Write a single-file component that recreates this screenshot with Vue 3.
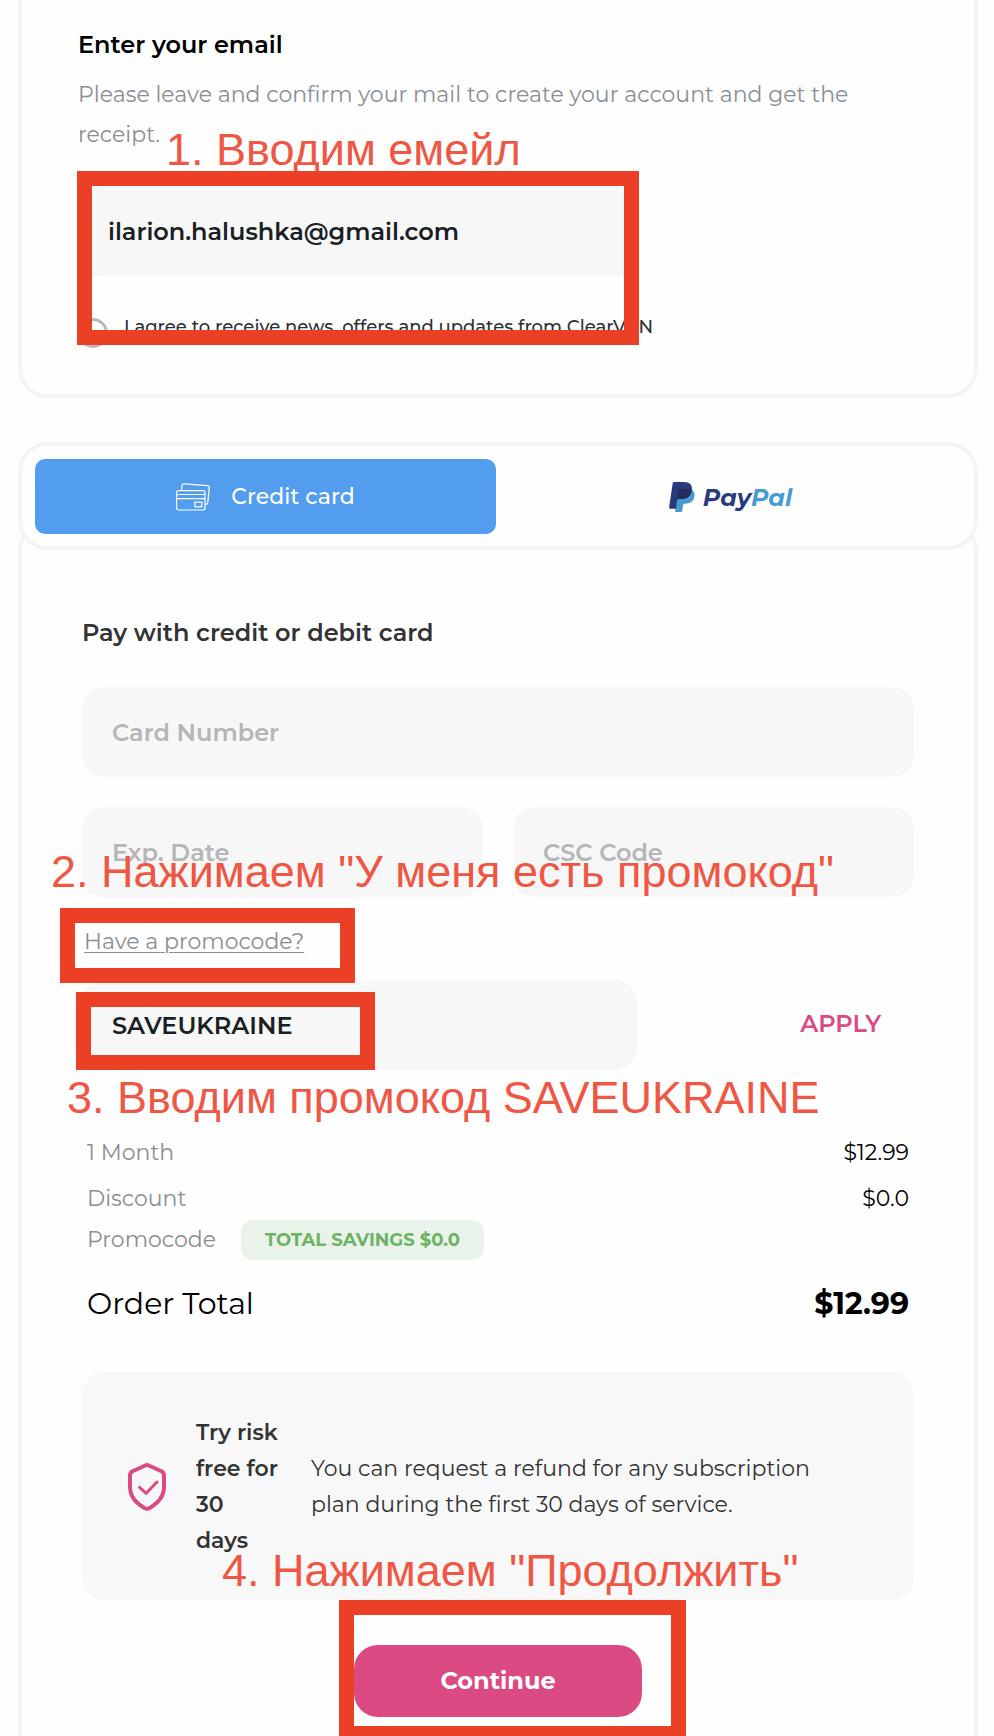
<script setup>
import { ref } from 'vue'

const email = ref('ilarion.halushka@gmail.com')
const promo = ref('SAVEUKRAINE')
const news = ref(false)
const card = ref('')
const exp = ref('')
const csc = ref('')
</script>

<template>
  <main class="page">
    <section class="panel email-panel">
      <h2 class="title">Enter your email</h2>
      <p class="lead">Please leave and confirm your mail to create your account and get the receipt.</p>
      <div class="email-field">
        <input v-model="email" class="field" type="email" aria-label="Email" />
        <span class="mark mark-email"></span>
        <span class="note note-email">1. Вводим емейл</span>
      </div>
      <div class="agree">
        <input id="news" v-model="news" class="round" type="checkbox" />
        <label for="news">I agree to receive news, offers and updates from ClearVPN</label>
      </div>
    </section>

    <div class="tabs">
      <button class="tab active" type="button">
        <svg class="cards-icon" viewBox="0 0 34 28" fill="none" stroke="#fff" stroke-width="1.2" aria-hidden="true">
          <rect x="0.6" y="7.6" width="28.4" height="19.4" rx="2" />
          <path d="M0.6 11.5H29M0.6 15.7H29" />
          <rect x="18.8" y="19.2" width="7" height="4.6" />
          <path d="M5.4 7.3 6 2.4Q6.2 .7 8 .8L31.8 2.6Q33.4 2.8 33.3 4.4L31.8 19.6Q31.5 21.6 29.2 21.5" />
        </svg>
        <span>Credit card</span>
      </button>
      <button class="tab" type="button">
        <svg class="pp-icon" viewBox="0 0 26 30" aria-hidden="true">
          <path fill="#469bd3" d="M22.5 7.5C25 9 26 11.300 25.400 14.500C24.600 19.400 21 21.700 16 21.700H15.200Q14.400 21.700 14.200 22.500L13.200 29Q13 30 12 30H7Q6 30 6.200 29L9.400 8Z" />
          <path fill="#283b7d" d="M5.200 0H14.500C20.500 0 23.500 2.700 22.800 7.800C22 13.800 18.500 17 12.500 17H9.500Q8.300 17 8.100 18.200L7 26.700H1Q0 26.700 .1 25.600L3.700 1.300Q3.900 0 5.200 0Z" />
          <path fill="#232c5e" d="M10.800 7H22.900C22.500 13.800 18.500 17 12.500 17H9.500Q8.300 17 8.100 18L9.500 8.200Q9.700 7 10.800 7Z" />
        </svg>
        <span class="pp-word">Pay<span class="pp-pal">Pal</span></span>
      </button>
    </div>

    <section class="panel pay-panel">
      <h2 class="title dark">Pay with credit or debit card</h2>
      <form class="form" @submit.prevent>
        <input v-model="card" class="field" type="text" placeholder="Card Number" aria-label="Card Number" />
        <div class="pair">
          <input v-model="exp" class="field" type="text" placeholder="Exp. Date" aria-label="Exp. Date" />
          <input v-model="csc" class="field" type="text" placeholder="CSC Code" aria-label="CSC Code" />
          <span class="note note-have">2. Нажимаем "У меня есть промокод"</span>
        </div>
        <div class="have">
          <a href="#promo">Have a promocode?</a>
          <span class="mark mark-have"></span>
        </div>
        <div class="promo">
          <input id="promo" v-model="promo" class="field" type="text" aria-label="Promocode" />
          <button class="apply" type="button">APPLY</button>
          <span class="mark mark-promo"></span>
          <span class="note note-promo">3. Вводим промокод SAVEUKRAINE</span>
        </div>

        <div class="summary">
          <div class="row"><span>1 Month</span><span class="price">$12.99</span></div>
          <div class="row"><span>Discount</span><span class="price">$0.0</span></div>
          <div class="row saving"><span>Promocode</span><span class="badge">TOTAL SAVINGS $0.0</span></div>
          <div class="row total"><span>Order Total</span><strong>$12.99</strong></div>
        </div>

        <div class="refund">
          <svg class="shield" viewBox="0 0 38 48" fill="none" stroke="#db4a83" stroke-linecap="round" stroke-linejoin="round" aria-hidden="true">
            <path stroke-width="4" d="M17.300 2.500Q19 1.700 20.700 2.500L33.500 8.300Q36 9.600 36 12.500V24C36 33 29.500 40.500 21 45.300Q19 46.400 17 45.300C8.500 40.500 2 33 2 24V12.500Q2 9.600 4.500 8.300Z" />
            <path stroke-width="3" d="M11.500 24.300 18.200 30.300 29 19" />
          </svg>
          <strong class="risk">Try risk free for 30 days</strong>
          <p class="terms">You can request a refund for any subscription plan during the first 30 days of service.</p>
          <span class="note note-go">4. Нажимаем "Продолжить"</span>
        </div>

        <div class="submit">
          <button class="continue" type="submit">Continue</button>
          <span class="mark mark-go"></span>
        </div>
      </form>
    </section>
  </main>
</template>

<style>
body {
  margin: 0;
  background: #fefefe;
}
</style>

<style scoped>
* {
  box-sizing: border-box;
}

.page {
  padding: 0 16px 0 18px;
  overflow: clip;
  font-family: Montserrat, Inter, "Noto Sans", sans-serif;
  font-size: 22px;
  color: #000;
}

.panel {
  border: 4px solid #f3f5f5;
  border-radius: 30px;
}

.email-panel {
  padding: 30px 56px 46px;
  border-top: none;
  border-top-left-radius: 0;
  border-top-right-radius: 0;
}

.title {
  margin: 0;
  font-size: 24px;
  line-height: 30px;
  font-weight: 600;
}

.dark {
  color: #333;
}

.lead {
  margin: 15px 0 31px;
  line-height: 40px;
  color: #8b8e92;
}

.field {
  display: block;
  width: 100%;
  min-width: 0;
  height: 90px;
  padding: 0 30px;
  border: none;
  border-radius: 22px;
  outline: none;
  background: #f7f7f7;
  font: inherit;
  font-size: 24px;
  font-weight: 600;
  color: #1a1f25;
}

.field::placeholder {
  color: #b5b6b8;
  opacity: 1;
}

.email-field {
  position: relative;
  max-width: 560px;
}

.agree {
  display: flex;
  align-items: flex-start;
  gap: 16px;
  margin-top: 42px;
  font-size: 18px;
  line-height: 18px;
  font-weight: 500;
  color: #2c3036;
}

.round {
  appearance: none;
  flex: none;
  width: 30px;
  height: 30px;
  margin: 0;
  border: 3px solid #b9b9b9;
  border-radius: 50%;
}

.mark {
  position: absolute;
  z-index: 1;
  border: 15px solid #eb4026;
  pointer-events: none;
}

.note {
  position: absolute;
  font-family: "Liberation Sans", Arial, sans-serif;
  font-size: 45px;
  line-height: 50px;
  font-weight: 400;
  white-space: nowrap;
  color: #ef5644;
  pointer-events: none;
}

.mark-email {
  inset: -15px -1px -69px -1px;
}

.note-email {
  left: 88px;
  top: -61px;
}

.tabs {
  position: relative;
  display: grid;
  grid-template-columns: 1fr 1fr;
  gap: 4px;
  margin-top: 44px;
  padding: 13px 13px 12px;
  border: 4px solid #f3f5f5;
  border-radius: 30px;
  background: #fefefe;
}

.tab {
  display: flex;
  align-items: center;
  justify-content: center;
  height: 75px;
  padding: 0;
  border: none;
  border-radius: 10px;
  background: none;
  font: inherit;
  font-weight: 500;
}

.active {
  gap: 21px;
  background: #529dee;
  color: #fff;
}

.cards-icon {
  width: 34px;
  height: 28px;
}

.pp-icon {
  width: 26px;
  height: 30px;
  margin-right: 8px;
}

.pp-word {
  padding-top: 2px;
  font-size: 24px;
  line-height: 30px;
  font-weight: 700;
  font-style: italic;
  color: #283b7d;
}

.pp-pal {
  color: #469bd3;
}

.pay-panel {
  margin-top: -30px;
  padding: 94px 60px 19px;
  border-bottom: none;
  border-bottom-left-radius: 0;
  border-bottom-right-radius: 0;
}

.form {
  margin-top: 39px;
}

.pair {
  position: relative;
  display: grid;
  grid-template-columns: 1fr 1fr;
  gap: 30px;
  margin-top: 30px;
}

.note-have {
  left: -31px;
  top: 40px;
}

.have {
  position: relative;
  margin: 30px 2px 23px;
  line-height: 30px;
}

.have a {
  color: #8b8e92;
  text-decoration-thickness: 1px;
  text-underline-offset: 3px;
}

.mark-have {
  left: -24px;
  top: -19px;
  width: 295px;
  height: 75px;
}

.promo {
  position: relative;
  display: grid;
  grid-template-columns: 2fr 1fr;
  align-items: center;
}

.apply {
  justify-self: end;
  margin-right: 33px;
  padding: 0 0 4px;
  border: none;
  background: none;
  font: inherit;
  font-size: 24px;
  font-weight: 600;
  color: #db4a83;
}

.mark-promo {
  left: -6px;
  top: 12px;
  width: 299px;
  height: 78px;
}

.note-promo {
  left: -15px;
  top: 93px;
}

.summary {
  margin: 68px 5px 48px;
  line-height: 30px;
  color: #8b8e92;
}

.row {
  display: flex;
  justify-content: space-between;
  margin-top: 16px;
}

.price {
  color: #000;
}

.saving {
  justify-content: flex-start;
  gap: 25px;
  margin-top: 6px;
  line-height: 40px;
}

.badge {
  padding: 0 24px;
  border-radius: 12px;
  background: #eaf3ea;
  font-size: 18px;
  font-weight: 700;
  color: #6cb465;
}

.total {
  margin-top: 24px;
  font-size: 30px;
  line-height: 40px;
  color: #000;
}

.refund {
  position: relative;
  display: flex;
  align-items: center;
  padding: 43px 46px 41px;
  border-radius: 22px;
  background: #f8f8f8;
  line-height: 36px;
  color: #333;
}

.shield {
  flex: none;
  width: 38px;
  height: 48px;
}

.risk {
  flex: none;
  width: 85px;
  margin: 0 30px;
  font-weight: 600;
}

.terms {
  max-width: 520px;
  margin: 0;
}

.note-go {
  left: 140px;
  top: 174px;
}

.submit {
  position: relative;
  width: 288px;
  margin: 45px auto 0;
}

.continue {
  display: block;
  width: 100%;
  height: 72px;
  padding: 0 0 2px;
  border: none;
  border-radius: 24px;
  background: #db4a83;
  font: inherit;
  font-size: 24px;
  font-weight: 700;
  color: #fff;
}

.mark-go {
  inset: -45px -44px -24px -15px;
}
</style>
